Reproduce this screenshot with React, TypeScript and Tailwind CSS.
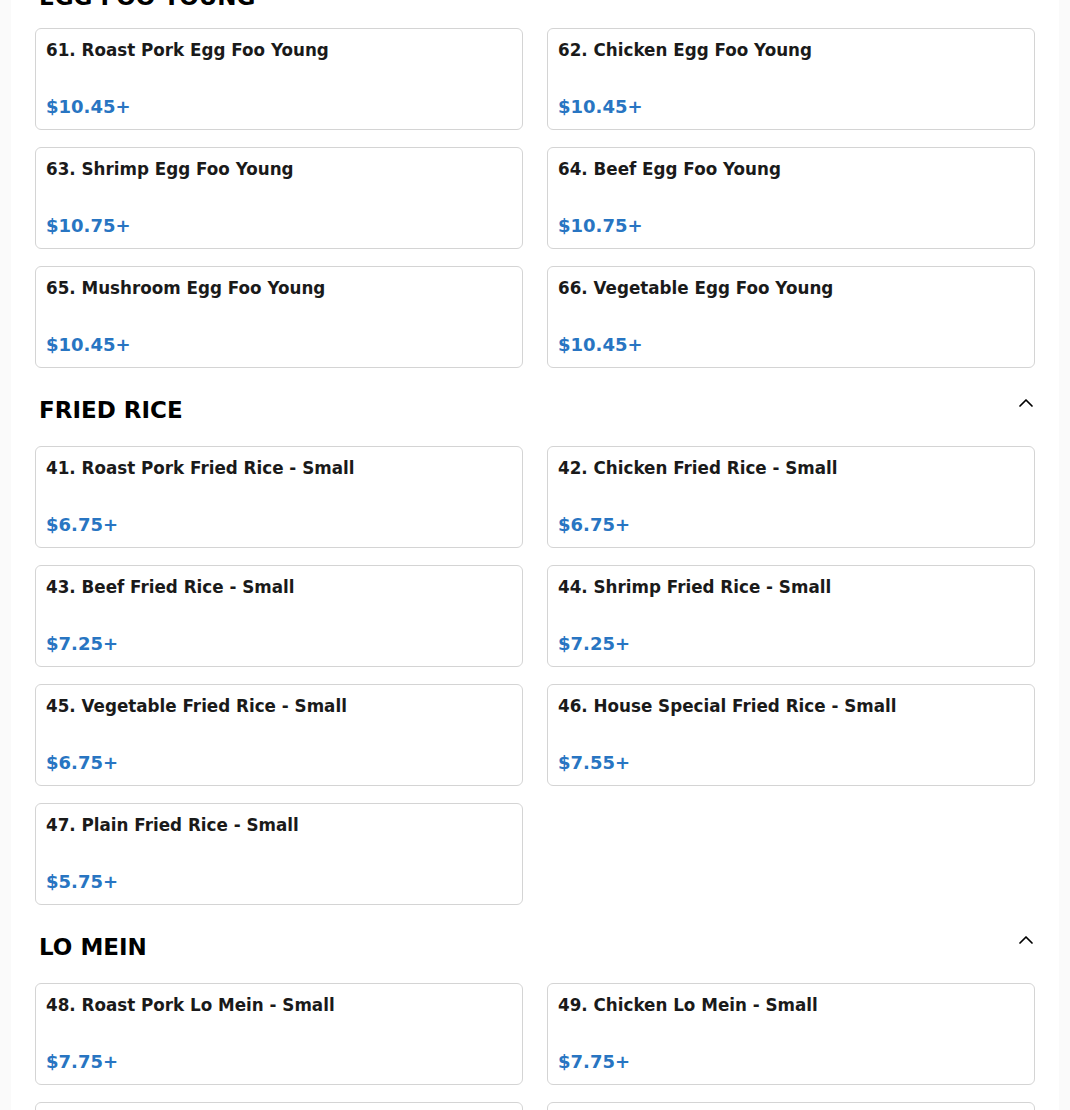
import { ChevronUp } from "lucide-react";

interface MenuItem {
  name: string;
  price: string;
}

interface MenuSection {
  title: string;
  items: MenuItem[];
}

const sections: MenuSection[] = [
  {
    title: "EGG FOO YOUNG",
    items: [
      { name: "61. Roast Pork Egg Foo Young", price: "$10.45+" },
      { name: "62. Chicken Egg Foo Young", price: "$10.45+" },
      { name: "63. Shrimp Egg Foo Young", price: "$10.75+" },
      { name: "64. Beef Egg Foo Young", price: "$10.75+" },
      { name: "65. Mushroom Egg Foo Young", price: "$10.45+" },
      { name: "66. Vegetable Egg Foo Young", price: "$10.45+" },
    ],
  },
  {
    title: "FRIED RICE",
    items: [
      { name: "41. Roast Pork Fried Rice - Small", price: "$6.75+" },
      { name: "42. Chicken Fried Rice - Small", price: "$6.75+" },
      { name: "43. Beef Fried Rice - Small", price: "$7.25+" },
      { name: "44. Shrimp Fried Rice - Small", price: "$7.25+" },
      { name: "45. Vegetable Fried Rice - Small", price: "$6.75+" },
      { name: "46. House Special Fried Rice - Small", price: "$7.55+" },
      { name: "47. Plain Fried Rice - Small", price: "$5.75+" },
    ],
  },
  {
    title: "LO MEIN",
    items: [
      { name: "48. Roast Pork Lo Mein - Small", price: "$7.75+" },
      { name: "49. Chicken Lo Mein - Small", price: "$7.75+" },
      { name: "50. Beef Lo Mein - Small", price: "$8.25+" },
      { name: "51. Shrimp Lo Mein - Small", price: "$8.25+" },
    ],
  },
];

function ItemCard({ item }: { item: MenuItem }) {
  return (
    <div className="h-[102px] flex flex-col justify-between bg-white border border-[#d4d4d4] rounded-md px-[10px] pt-[9px] pb-[10px]">
      <div className="text-[16.75px] leading-6 font-bold text-[#1a1a1a]">{item.name}</div>
      <div className="text-[18px] leading-6 font-bold text-[#2875c2]">{item.price}</div>
    </div>
  );
}

export default function App() {
  return (
    <div className="min-h-screen bg-[#fafafa] font-['DejaVu_Sans',sans-serif] overflow-hidden">
      <div className="max-w-[1048px] mx-auto bg-white px-6 pb-10 -mt-[19px]">
        {sections.map((section, i) => (
          <section key={section.title} className={i === 0 ? "" : "mt-[26px]"}>
            <div
              className={`flex items-start justify-between pl-1 ${i === 0 ? "mb-[15px]" : "mb-5"}`}
            >
              <h2 className="text-[23px] leading-8 font-bold text-black">{section.title}</h2>
              <button className="-mr-[3px] mt-[-3px] text-black">
                <ChevronUp size={24} strokeWidth={1.75} />
              </button>
            </div>
            <div className="grid grid-cols-2 gap-x-6 gap-y-[17px]">
              {section.items.map((item) => (
                <ItemCard key={item.name} item={item} />
              ))}
            </div>
          </section>
        ))}
      </div>
    </div>
  );
}
